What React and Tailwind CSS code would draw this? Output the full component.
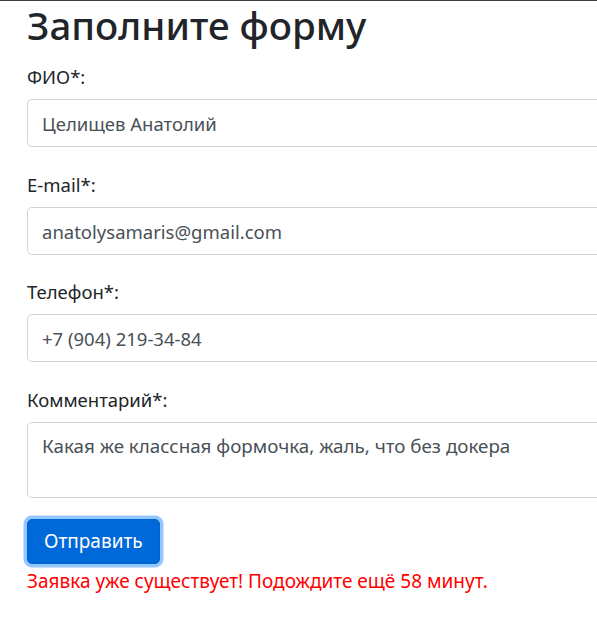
export default function App() {
  const font = { fontFamily: '"Noto Sans", "Open Sans", sans-serif' };
  const inputCls =
    "block w-[620px] h-[48px] pl-[14px] pr-4 text-[18.5px] text-[#495057] bg-white border border-[#ced4da] rounded-[5px] outline-none";
  const labelCls = "block text-[18.5px] leading-[24px] text-[#212529] mb-[10px]";
  return (
    <div className="w-screen min-h-screen overflow-hidden bg-white" style={font}>
      <div className="h-px bg-[#3c3c41]" />
      <div className="pl-[27px]">
        <h1 className="text-[38.5px] leading-[48px] font-medium text-[#212529] mt-0 mb-[16px]">
          Заполните форму
        </h1>
        <div className="mb-[26px]">
          <label className={labelCls}>ФИО*:</label>
          <input className={inputCls} defaultValue="Целищев Анатолий" />
        </div>
        <div className="mb-[25px]">
          <label className={labelCls}>E-mail*:</label>
          <input className={inputCls} defaultValue="anatolysamaris@gmail.com" />
        </div>
        <div className="mb-[26px]">
          <label className={labelCls}>Телефон*:</label>
          <input className={inputCls} defaultValue="+7 (904) 219-34-84" />
        </div>
        <div className="mb-[21px]">
          <label className={labelCls}>Комментарий*:</label>
          <textarea
            className="block w-[620px] h-[76px] pl-[14px] pr-4 py-2 text-[18.8px] leading-[30px] text-[#495057] bg-white border border-[#ced4da] rounded-[5px] outline-none resize-none"
            defaultValue="Какая же классная формочка, жаль, что без докера"
          />
        </div>
        <button className="block h-[45px] px-4 text-[19px] text-white bg-[#0069d9] border border-[#0062cc] rounded-[5px] shadow-[0_0_0_3.5px_rgba(38,143,255,0.5)]">
          Отправить
        </button>
        <div className="mt-[5px] text-[19px] leading-[24px] text-[#ff0000]">
          Заявка уже существует! Подождите ещё 58 минут.
        </div>
      </div>
    </div>
  );
}
